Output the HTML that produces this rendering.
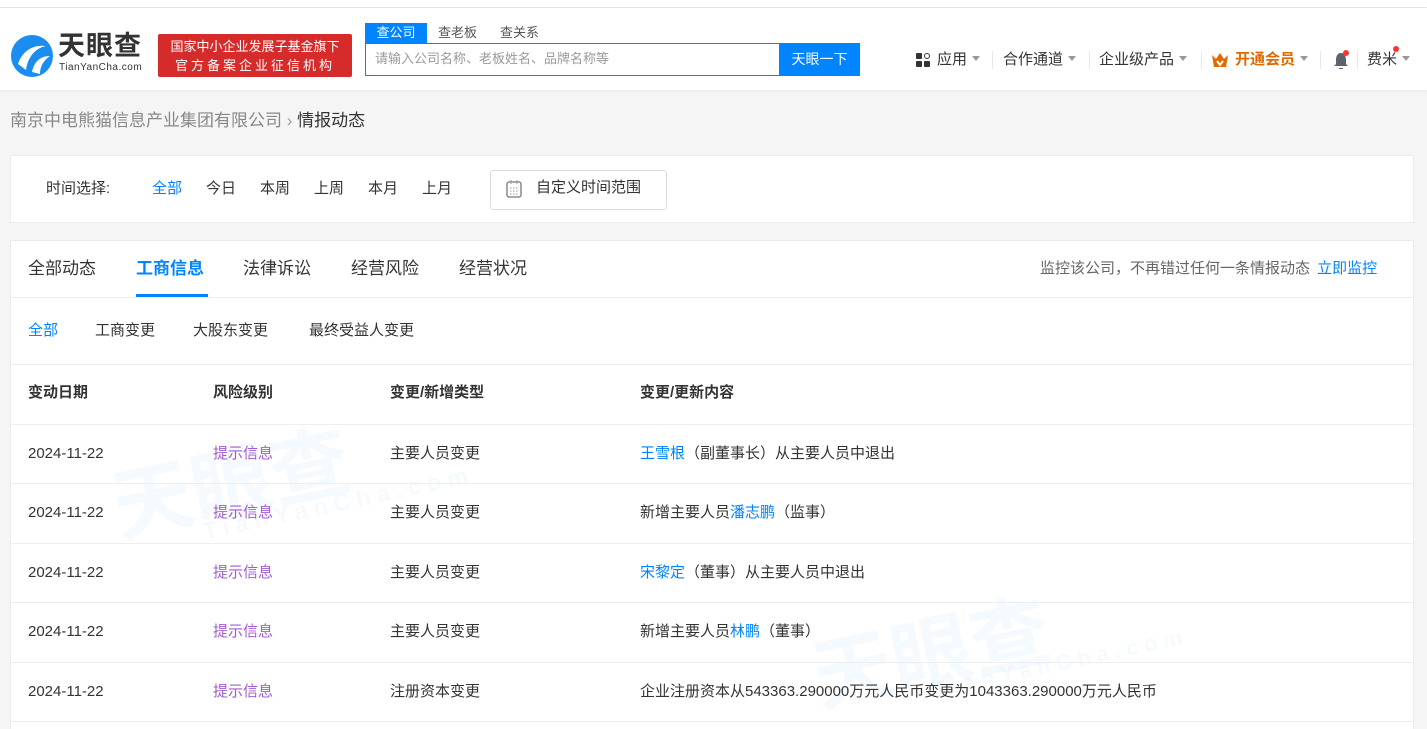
<!DOCTYPE html>
<html><head><meta charset="utf-8"><style>
*{margin:0;padding:0;box-sizing:border-box}
html,body{width:1427px;height:729px;overflow:hidden}
body{background:#f5f5f5;font-family:"Liberation Sans","Noto Sans CJK SC",sans-serif;color:#333;position:relative}
.top{position:absolute;left:0;top:0;width:1427px;height:8px;background:#fff;border-bottom:1px solid #e6e6e6}
.hdr{position:absolute;left:0;top:8px;width:1427px;height:82px;background:#fff;box-shadow:0 1px 3px rgba(0,0,0,.06)}
.abs{position:absolute}
.card{position:absolute;background:#fff;border:1px solid #ececec}
.t{position:absolute;white-space:nowrap;line-height:20px}
.nav{font-size:15px;color:#333}
.caret{display:inline-block;width:0;height:0;border-left:4px solid transparent;border-right:4px solid transparent;border-top:5px solid #999;margin-left:5px;vertical-align:3px}
.sep{position:absolute;width:1px;height:18px;background:#e8e8e8}
.row{position:absolute;left:10px;width:1404px;border-top:1px solid #eee;height:60px;font-size:15px}
.row span{position:absolute;top:19px;white-space:nowrap;line-height:20px}
.b{color:#0084ff}.p{color:#a25cd3}
.wm{position:absolute;color:rgba(0,132,255,.04);font-weight:bold;transform:rotate(-12deg);white-space:nowrap}
</style></head><body>
<div class="top"></div>
<div class="hdr">
 <svg class="abs" style="left:10px;top:26px" width="44" height="44" viewBox="0 0 44 44"><circle cx="22" cy="22" r="21" fill="#1b8cf0"/><path d="M8 30 C12 18 22 10 36 12 C26 14 18 22 16 36 Z" fill="#fff"/><path d="M22 38 C24 28 30 22 40 22 C34 26 30 32 30 40Z" fill="#fff"/></svg>
 <div class="t" style="left:58px;top:22px;font-size:27px;line-height:32px;font-weight:bold;color:#333;letter-spacing:1px">天眼查</div>
 <div class="t" style="left:59px;top:54px;font-size:10px;line-height:12px;color:#333;letter-spacing:.5px">TianYanCha.com</div>
 <div class="abs" style="left:158px;top:26px;width:194px;height:43px;background:#d62b2b;border-radius:2px;color:#fff;font-size:13px;text-align:center;line-height:19px;padding-top:3px">国家中小企业发展子基金旗下<br><span style="letter-spacing:3px">官方备案企业征信机构</span></div>
 <div class="abs" style="left:365px;top:15px;width:62px;height:20px;background:#0084ff;color:#fff;font-size:13px;text-align:center;line-height:20px">查公司</div>
 <div class="t" style="left:438px;top:15px;font-size:13px;color:#555">查老板</div>
 <div class="t" style="left:500px;top:15px;font-size:13px;color:#555">查关系</div>
 <div class="abs" style="left:365px;top:35px;width:495px;height:33px;border:1px solid #0084ff;background:#fff"></div>
 <div class="t" style="left:375px;top:41px;font-size:13px;color:#999">请输入公司名称、老板姓名、品牌名称等</div>
 <div class="abs" style="left:779px;top:35px;width:81px;height:33px;background:#0084ff;color:#fff;font-size:14px;text-align:center;line-height:33px">天眼一下</div>
 <div class="abs" style="left:916px;top:45px;width:15px;height:15px"><i class="abs" style="left:0;top:0;width:6px;height:6px;background:#333;border-radius:1px"></i><i class="abs" style="left:8px;top:0;width:6px;height:6px;border:1.5px solid #333;border-radius:50%"></i><i class="abs" style="left:0;top:8px;width:6px;height:6px;background:#333;border-radius:1px"></i><i class="abs" style="left:8px;top:8px;width:6px;height:6px;background:#333;border-radius:1px"></i></div>
 <div class="t nav" style="left:937px;top:42px">应用<i class="caret"></i></div>
 <div class="sep" style="left:992px;top:43px"></div>
 <div class="t nav" style="left:1003px;top:42px">合作通道<i class="caret"></i></div>
 <div class="sep" style="left:1089px;top:43px"></div>
 <div class="t nav" style="left:1099px;top:42px">企业级产品<i class="caret"></i></div>
 <div class="sep" style="left:1201px;top:43px"></div>
 <svg class="abs" style="left:1211px;top:45px" width="18" height="15" viewBox="0 0 18 15"><path d="M1 2 L5 6 L9 0 L13 6 L17 2 L15 14 L3 14Z" fill="#e06a00"/><path d="M6 8 L9 12 L12 8" stroke="#fff" stroke-width="2" fill="none"/></svg>
 <div class="t nav" style="left:1235px;top:42px;color:#e06a00;font-weight:bold">开通会员<i class="caret"></i></div>
 <div class="sep" style="left:1320px;top:43px"></div>
 <svg class="abs" style="left:1332px;top:42px" width="18" height="20" viewBox="0 0 18 20"><path d="M9 3 C5 3 4 7 4 10 L4 14 L2 16 L16 16 L14 14 L14 10 C14 7 13 3 9 3Z M7 18 h4 v1 h-4z" fill="#5f6370"/><circle cx="14" cy="3" r="3" fill="#f33"/></svg>
 <div class="sep" style="left:1357px;top:43px"></div>
 <div class="t nav" style="left:1367px;top:42px">费米<i class="caret"></i></div>
 <i class="abs" style="left:1393px;top:38px;width:6px;height:6px;border-radius:50%;background:#f33"></i>
</div>
<div class="t" style="left:10px;top:111px;font-size:17px;color:#888">南京中电熊猫信息产业集团有限公司 <span style="color:#999">›</span> <span style="color:#333">情报动态</span></div>

<div class="card" style="left:10px;top:155px;width:1404px;height:68px">
 <div class="t" style="left:35px;top:23px;font-size:15px">时间选择:</div>
 <div class="t" style="left:141px;top:23px;font-size:15px;color:#0084ff">全部</div>
 <div class="t" style="left:195px;top:23px;font-size:15px">今日</div>
 <div class="t" style="left:249px;top:23px;font-size:15px">本周</div>
 <div class="t" style="left:303px;top:23px;font-size:15px">上周</div>
 <div class="t" style="left:357px;top:23px;font-size:15px">本月</div>
 <div class="t" style="left:411px;top:23px;font-size:15px">上月</div>
 <div class="abs" style="left:479px;top:14px;width:177px;height:40px;border:1px solid #ddd;border-radius:3px"></div>
 <svg class="abs" style="left:495px;top:24px" width="16" height="18" viewBox="0 0 16 18"><rect x="1" y="2" width="14" height="15" rx="2" fill="none" stroke="#777" stroke-width="1.3"/><path d="M5 0v4M11 0v4M4 8h8M4 11h8M4 14h8" stroke="#999" stroke-width="1" stroke-dasharray="1.5 1.5"/></svg>
 <div class="t" style="left:525px;top:22px;font-size:15px">自定义时间范围</div>
</div>

<div class="card" style="left:10px;top:240px;width:1404px;height:489px;border-bottom:none"></div>
<div class="t" style="left:28px;top:259px;font-size:17px">全部动态</div>
<div class="t" style="left:136px;top:259px;font-size:17px;color:#0084ff;font-weight:bold">工商信息</div>
<div class="abs" style="left:136px;top:294px;width:72px;height:3px;background:#0084ff"></div>
<div class="t" style="left:243px;top:259px;font-size:17px">法律诉讼</div>
<div class="t" style="left:351px;top:259px;font-size:17px">经营风险</div>
<div class="t" style="left:459px;top:259px;font-size:17px">经营状况</div>
<div class="t" style="left:1040px;top:259px;font-size:15px;color:#666">监控该公司，不再错过任何一条情报动态 <span style="color:#0084ff;margin-left:3px">立即监控</span></div>
<div class="abs" style="left:10px;top:297px;width:1404px;height:1px;background:#eee"></div>
<div class="t" style="left:28px;top:321px;font-size:15px;color:#0084ff">全部</div>
<div class="t" style="left:95px;top:321px;font-size:15px">工商变更</div>
<div class="t" style="left:193px;top:321px;font-size:15px">大股东变更</div>
<div class="t" style="left:309px;top:321px;font-size:15px">最终受益人变更</div>
<div class="abs" style="left:10px;top:364px;width:1404px;height:1px;background:#eee"></div>

<div class="wm" style="left:110px;top:420px;font-size:80px">天眼查</div>
<div class="wm" style="left:200px;top:490px;font-size:24px;letter-spacing:6px">TianYanCha.com</div>
<div class="wm" style="left:810px;top:590px;font-size:80px">天眼查</div>
<div class="wm" style="left:930px;top:650px;font-size:22px;letter-spacing:6px">TianYanCha.com</div>

<div class="t" style="left:28px;top:383px;font-size:15px;font-weight:bold">变动日期</div>
<div class="t" style="left:213px;top:383px;font-size:15px;font-weight:bold">风险级别</div>
<div class="t" style="left:390px;top:383px;font-size:15px;font-weight:bold">变更/新增类型</div>
<div class="t" style="left:640px;top:383px;font-size:15px;font-weight:bold">变更/更新内容</div>

<div class="row" style="top:424px"><span style="left:18px">2024-11-22</span><span class="p" style="left:203px">提示信息</span><span style="left:380px">主要人员变更</span><span style="left:630px"><b class="b" style="font-weight:normal">王雪根</b>（副董事长）从主要人员中退出</span></div>
<div class="row" style="top:483px"><span style="left:18px">2024-11-22</span><span class="p" style="left:203px">提示信息</span><span style="left:380px">主要人员变更</span><span style="left:630px">新增主要人员<b class="b" style="font-weight:normal">潘志鹏</b>（监事）</span></div>
<div class="row" style="top:543px"><span style="left:18px">2024-11-22</span><span class="p" style="left:203px">提示信息</span><span style="left:380px">主要人员变更</span><span style="left:630px"><b class="b" style="font-weight:normal">宋黎定</b>（董事）从主要人员中退出</span></div>
<div class="row" style="top:602px"><span style="left:18px">2024-11-22</span><span class="p" style="left:203px">提示信息</span><span style="left:380px">主要人员变更</span><span style="left:630px">新增主要人员<b class="b" style="font-weight:normal">林鹏</b>（董事）</span></div>
<div class="row" style="top:662px"><span style="left:18px">2024-11-22</span><span class="p" style="left:203px">提示信息</span><span style="left:380px">注册资本变更</span><span style="left:630px">企业注册资本从543363.290000万元人民币变更为1043363.290000万元人民币</span></div>
<div class="abs" style="left:10px;top:721px;width:1404px;height:1px;background:#eee"></div>
</body></html>
